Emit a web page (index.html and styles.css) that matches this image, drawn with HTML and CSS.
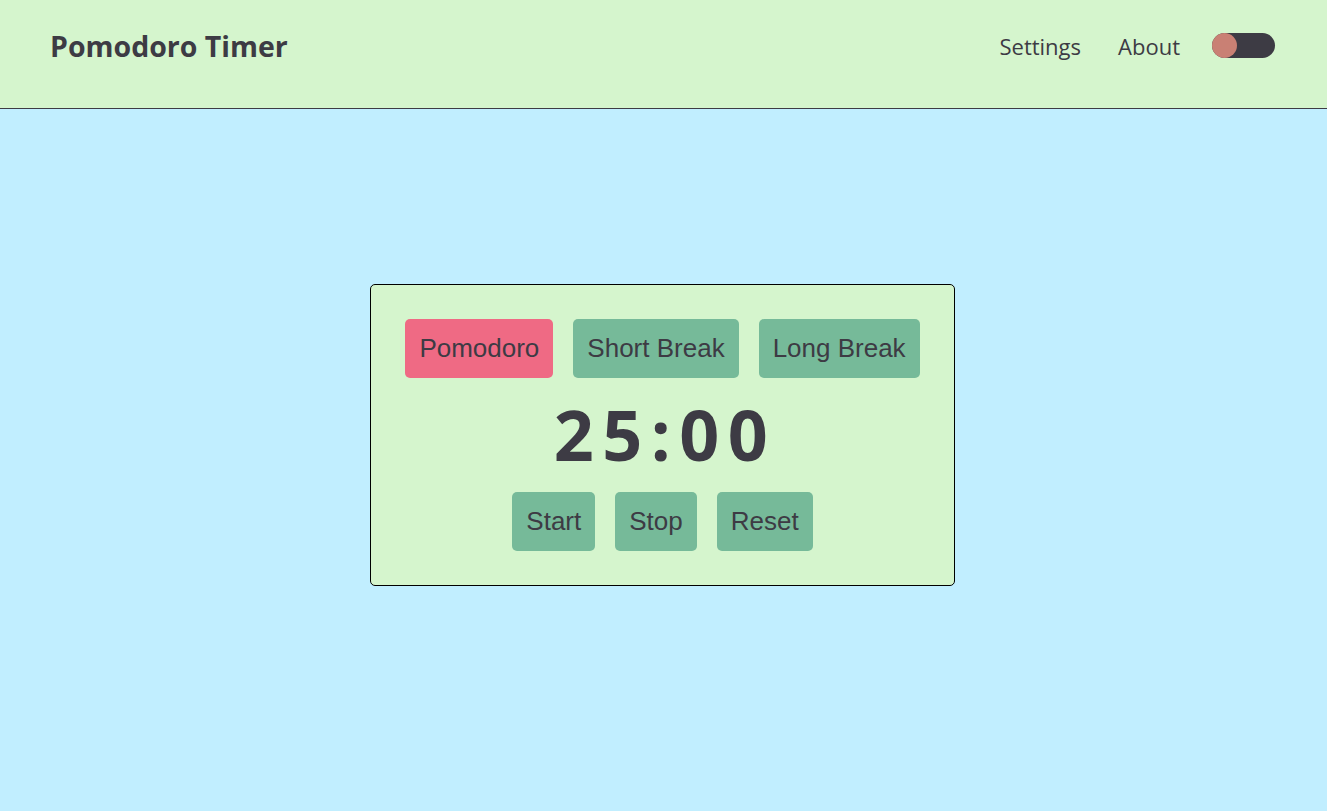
FILE: index.html
```html
<!DOCTYPE html>
<html lang="en">
<head>
<meta charset="utf-8">
<title>Pomodoro Timer</title>
<link rel="stylesheet" href="styles.css">
</head>
<body>
<header class="topbar">
  <h1 class="brand">Pomodoro Timer</h1>
  <nav class="nav">
    <a class="nav-link" href="#">Settings</a>
    <a class="nav-link" href="#">About</a>
    <span class="toggle"><span class="toggle-knob"></span></span>
  </nav>
</header>
<main class="main">
  <section class="card">
    <div class="modes">
      <button class="btn btn-active">Pomodoro</button>
      <button class="btn">Short Break</button>
      <button class="btn">Long Break</button>
    </div>
    <div class="timer">25:00</div>
    <div class="controls">
      <button class="btn">Start</button>
      <button class="btn">Stop</button>
      <button class="btn">Reset</button>
    </div>
  </section>
</main>
</body>
</html>
```
FILE: styles.css
```css
* { box-sizing: border-box; }
html, body { margin: 0; padding: 0; }
body {
  background: #c1eeff;
  color: #3d3b44;
  font-family: "Open Sans", "Noto Sans", sans-serif;
  min-height: 100vh;
}
.topbar {
  height: 109px;
  background: #d5f5cd;
  border-bottom: 1px solid #3d3b44;
  display: flex;
  align-items: center;
  justify-content: space-between;
  padding: 0 52px 17px 50px;
}
.brand {
  margin: 0;
  font-size: 28.5px;
  font-weight: 700;
  letter-spacing: 0;
}
.nav {
  display: flex;
  align-items: center;
}
.nav-link {
  color: #3d3b44;
  text-decoration: none;
  font-size: 22px;
  margin-right: 37px;
}
.nav-link:nth-child(2) { margin-right: 32px; }
.toggle {
  width: 63px;
  height: 25px;
  border-radius: 13px;
  background: #3d3b44;
  display: flex;
  align-items: center;
}
.toggle-knob {
  width: 25px;
  height: 25px;
  border-radius: 50%;
  background: #c98074;
}
.main {
  display: flex;
  justify-content: center;
  padding-top: 175px;
  padding-right: 2px;
}
.card {
  background: #d5f5cd;
  border: 1px solid #000;
  border-radius: 5px;
  padding: 34px;
  display: flex;
  flex-direction: column;
  align-items: center;
}
.modes, .controls {
  display: flex;
  gap: 20px;
}
.btn {
  font-family: "Liberation Sans", Arial, sans-serif;
  font-size: 26px;
  color: #3d3b44;
  background: #76ba99;
  border: none;
  border-radius: 5px;
  padding: 14px 14px;
  line-height: 31px;
  cursor: pointer;
}
.btn-active { background: #ef6a84; }
.timer {
  height: 114px;
  display: flex;
  align-items: center;
  justify-content: center;
  font-size: 70px;
  font-weight: 700;
  letter-spacing: 8.5px;
  padding-left: 5px;
  padding-bottom: 2px;
  line-height: 1;
}
```
